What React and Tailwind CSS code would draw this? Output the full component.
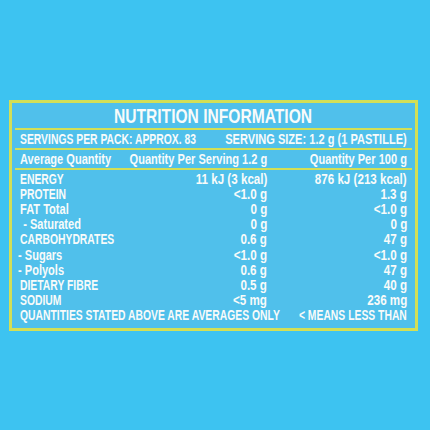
import React from 'react';

const rows = [
  { label: 'ENERGY', serving: '11 kJ (3 kcal)', per100: '876 kJ (213 kcal)' },
  { label: 'PROTEIN', serving: '<1.0 g', per100: '1.3 g' },
  { label: 'FAT Total', serving: '0 g', per100: '<1.0 g', mixed: true },
  { label: '- Saturated', serving: '0 g', per100: '0 g', indent: 'pl-1', mixed: true },
  { label: 'CARBOHYDRATES', serving: '0.6 g', per100: '47 g' },
  { label: '- Sugars', serving: '<1.0 g', per100: '<1.0 g', indent: '-ml-0.5', mixed: true },
  { label: '- Polyols', serving: '0.6 g', per100: '47 g', indent: '-ml-0.5', mixed: true },
  { label: 'DIETARY FIBRE', serving: '0.5 g', per100: '40 g' },
  { label: 'SODIUM', serving: '<5 mg', per100: '236 mg' },
];

// the label font is a condensed grotesque; squeeze Liberation Sans to match
const squeeze = {
  caps: 'scale-x-[0.74]',
  mixed: 'scale-x-[0.79]',
  num: 'scale-x-[0.83]',
};

function Txt({ kind = 'caps', right = false, className = '', children }) {
  return (
    <span
      className={`inline-block shrink-0 whitespace-nowrap ${squeeze[kind]} ${
        right ? 'origin-right' : 'origin-left'
      } ${className}`}
    >
      {children}
    </span>
  );
}

function Cell({ right = false, children }) {
  return (
    <div className={`min-w-0 flex ${right ? 'justify-end' : 'justify-start'}`}>
      {children}
    </div>
  );
}

function Rule() {
  return <div className="h-[2px] bg-[#d3df56]" />;
}

export default function App() {
  return (
    <div
      className="w-[430px] h-[430px] bg-[#3dc3f1] pt-[100px] pl-[9px] text-[#f8fbfa] font-bold overflow-hidden"
      style={{ fontFamily: '"Liberation Sans", Arial, sans-serif' }}
    >
      <div className="w-[409px] h-[231px] border-[3px] border-[#d3df56] bg-[#50c0eb] px-[3px] flex flex-col">
        {/* Title */}
        <div className="h-[25px] flex items-center justify-center text-[20px] leading-none">
          <span className="inline-block shrink-0 whitespace-nowrap scale-x-[0.78] origin-center">
            NUTRITION INFORMATION
          </span>
        </div>
        <Rule />

        {/* Servings */}
        <div className="h-[18px] grid grid-cols-2 items-center px-[5px] text-[14px] leading-none">
          <Cell>
            <Txt>SERVINGS PER PACK: APPROX. 83</Txt>
          </Cell>
          <Cell right>
            <Txt kind="mixed" right>SERVING SIZE: 1.2 g (1 PASTILLE)</Txt>
          </Cell>
        </div>
        <Rule />

        {/* Column headings */}
        <div className="h-[18px] grid grid-cols-[110px_137px_minmax(0,1fr)] items-center px-[5px] text-[14px] leading-none">
          <Cell>
            <Txt kind="mixed">Average Quantity</Txt>
          </Cell>
          <Cell right>
            <Txt kind="mixed" right>Quantity Per Serving 1.2 g</Txt>
          </Cell>
          <Cell right>
            <Txt kind="mixed" right>Quantity Per 100 g</Txt>
          </Cell>
        </div>
        <Rule />

        {/* Values */}
        <div className="flex flex-col pt-[1px] px-[5px] text-[14px] leading-none">
          {rows.map((r) => (
            <div
              key={r.label}
              className="h-[15.2px] grid grid-cols-[110px_137px_minmax(0,1fr)] items-center"
            >
              <Cell>
                <Txt kind={r.mixed ? 'mixed' : 'caps'} className={r.indent || ''}>
                  {r.label}
                </Txt>
              </Cell>
              <Cell right>
                <Txt kind="num" right>{r.serving}</Txt>
              </Cell>
              <Cell right>
                <Txt kind="num" right>{r.per100}</Txt>
              </Cell>
            </div>
          ))}
          <div className="h-[15.2px] grid grid-cols-[270px_minmax(0,1fr)] items-center">
            <Cell>
              <Txt>QUANTITIES STATED ABOVE ARE AVERAGES ONLY</Txt>
            </Cell>
            <Cell right>
              <Txt right>&lt; MEANS LESS THAN</Txt>
            </Cell>
          </div>
        </div>
      </div>
    </div>
  );
}
